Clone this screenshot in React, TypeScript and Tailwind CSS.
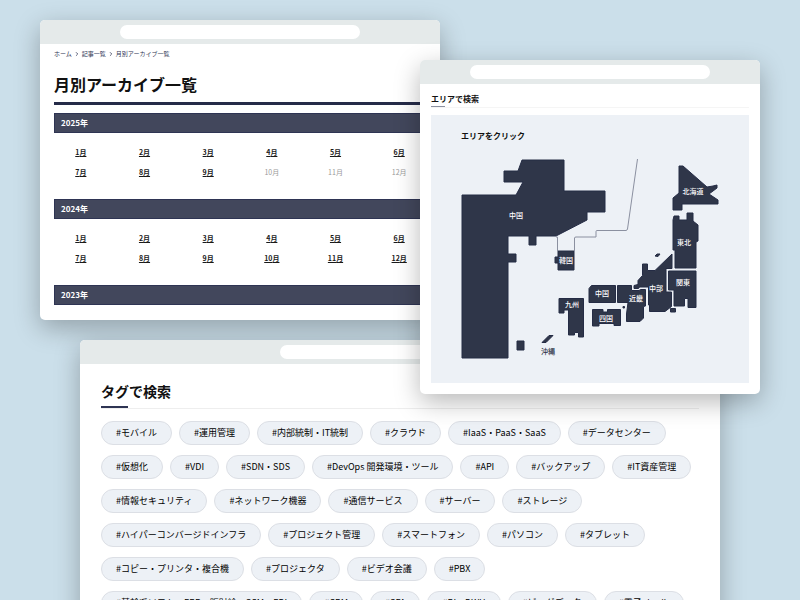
import type { ReactNode } from "react";
import { ChevronRight } from "lucide-react";

const years = [
  { year: 2025, lastMonth: 9 },
  { year: 2024, lastMonth: 12 },
];

const months = [1, 2, 3, 4, 5, 6, 7, 8, 9, 10, 11, 12];

const tags = [
  "モバイル",
  "運用管理",
  "内部統制・IT統制",
  "クラウド",
  "IaaS・PaaS・SaaS",
  "データセンター",
  "仮想化",
  "VDI",
  "SDN・SDS",
  "DevOps 開発環境・ツール",
  "API",
  "バックアップ",
  "IT資産管理",
  "情報セキュリティ",
  "ネットワーク機器",
  "通信サービス",
  "サーバー",
  "ストレージ",
  "ハイパーコンバージドインフラ",
  "プロジェクト管理",
  "スマートフォン",
  "パソコン",
  "タブレット",
  "コピー・プリンタ・複合機",
  "プロジェクタ",
  "ビデオ会議",
  "PBX",
  "基幹系ソフト・ERP・販財給・SCM・EDI",
  "CRM",
  "SFA",
  "BI・DWH",
  "ビッグデータ",
  "電子メール",
];

const areas = [
  {
    id: "china",
    name: "中国",
    x: 516,
    y: 218,
    d: "M462 195H516L523 182H504V171H518L522 160H564V191H605V212H587V220L556 236H536V245H529V236H508V254H516V262H508V358H462Z M517 341H524V350H517Z",
  },
  {
    id: "korea",
    name: "韓国",
    x: 566,
    y: 263,
    d: "M558 251H574V270H558V263H555V257H558Z",
  },
  {
    id: "hokkaido",
    name: "北海道",
    x: 693,
    y: 194,
    d: "M679 166H683L707 187L713 186L717 185V188L709 194L718 200V204H682V210H673V198L679 193Z",
  },
  {
    id: "tohoku",
    name: "東北",
    x: 684,
    y: 245,
    d: "M674 216H679V220H687V213H693V221L698 225V241L696 242V268H675V250H673V220Z",
  },
  {
    id: "kanto",
    name: "関東",
    x: 683,
    y: 285,
    d: "M668.5 271H696V307.5H688V298.5H684.5V306H674V290H668.5Z M670.5 308.5H675.5V312H670.5Z",
  },
  {
    id: "chubu",
    name: "中部",
    x: 656,
    y: 291,
    d: "M672 254V268.5H666V292H671.5V306.5L665 311.5H649.5V305H648.5V287H639.5L638.5 288.5H634V285.5L638 284.5V280.5L642.5 275.5V264H647.5V270.5H655Z M655 256L657 254H660L658 256.5Z",
  },
  {
    id: "kinki",
    name: "近畿",
    x: 636,
    y: 301,
    d: "M617.5 285.5H631.5V290.5H639L640.5 289.5H645.5V306L643.5 306.5V318L640 321.5H626.5V314L628 302.5H617.5Z M623 306.5H624.5V308H623Z",
  },
  {
    id: "chugoku",
    name: "中国",
    x: 602,
    y: 296,
    d: "M591.5 285.5H615.5V302.5H589V288.5Z",
  },
  {
    id: "shikoku",
    name: "四国",
    x: 606,
    y: 321,
    d: "M592.5 309.5H603V312H607.5V309.5H620.5V325.5H614V323.5H599V326H592.5Z",
  },
  {
    id: "kyushu",
    name: "九州",
    x: 572,
    y: 307,
    d: "M559 298.5H583.5V337H578.5V332.5H574.5V335H568.5V310H564V313H559Z",
  },
];

type BrowserWindowProps = {
  className: string;
  barClassName: string;
  children: ReactNode;
};

const BrowserWindow = ({ className, barClassName, children }: BrowserWindowProps) => {
  return (
    <section
      className={`absolute overflow-hidden rounded-[5px] bg-white shadow-[0_8px_26px_rgba(0,0,0,0.28)] ${className}`}
    >
      <div className="flex h-6 items-center justify-center bg-[#e5eaea]">
        <div className={`h-[14px] rounded-full bg-white ${barClassName}`} />
      </div>
      {children}
    </section>
  );
};

const YearTitle = ({ year }: { year: number }) => {
  return (
    <h2 className="flex h-5 items-center border border-[#2e3453] bg-[#42475c] px-[6px] text-[8px] font-bold text-white">
      {year}年
    </h2>
  );
};

const Archive = () => {
  return (
    <BrowserWindow className="left-[5%] top-5 w-1/2" barClassName="w-3/5">
      <div className="px-[14px] pb-[15px] pt-[5px]">
        <nav className="flex items-center gap-[2px] text-[6px] leading-[10px] text-[#2e3453]">
          <a href="#home">ホーム</a>
          <ChevronRight className="size-[6px]" strokeWidth={3} />
          <a href="#articles">記事一覧</a>
          <ChevronRight className="size-[6px]" strokeWidth={3} />
          <span>月別アーカイブ一覧</span>
        </nav>
        <h1 className="mt-[13px] border-b-[3px] border-[#252b48] pb-[6px] text-[16px] font-bold leading-6 text-[#111]">
          月別アーカイブ一覧
        </h1>
        <div className="mt-2">
          {years.map(({ year, lastMonth }) => (
            <div key={year}>
              <YearTitle year={year} />
              <ul className="grid grid-cols-6 gap-x-[10px] gap-y-2 pb-[21px] pt-[13px] text-center text-[7px] leading-3">
                {months.map((month) => (
                  <li key={month}>
                    {month <= lastMonth ? (
                      <a href={`#${year}-${month}`} className="font-bold text-[#1a1a1a] underline">
                        {month}月
                      </a>
                    ) : (
                      <span className="text-[#999]">{month}月</span>
                    )}
                  </li>
                ))}
              </ul>
            </div>
          ))}
          <YearTitle year={2023} />
        </div>
      </div>
    </BrowserWindow>
  );
};

const AreaMap = () => {
  return (
    <svg viewBox="431 145 318 238" className="block w-full" role="img" aria-label="エリア">
      <path
        d="M556 237H557.5V251M574.5 251V238Q574.5 237 576 237H596V231.5Q596 230.5 597 230.5H626Q627 230.5 627.5 229L637.5 159"
        fill="none"
        stroke="#8b90a0"
      />
      {areas.map((area) => (
        <a key={area.id} href={`#${area.id}`}>
          <path d={area.d} fill="#2f3649" stroke="#252c45" strokeLinejoin="round" />
          <text x={area.x} y={area.y} textAnchor="middle" className="fill-white text-[7px] font-medium">
            {area.name}
          </text>
        </a>
      ))}
      <a href="#okinawa">
        <path d="M542 342.5L549 335.5H553L546 342.5Z" fill="#2f3649" stroke="#252c45" />
        <text x="548" y="354" textAnchor="middle" className="fill-[#2f3649] text-[7px] font-medium">
          沖縄
        </text>
      </a>
    </svg>
  );
};

const AreaSearch = () => {
  return (
    <BrowserWindow className="left-[52.5%] top-[60px] w-[42.5%]" barClassName="w-[240px]">
      <div className="px-[11px] pb-[11px] pt-2">
        <div className="border-b border-[#f5f5f5]">
          <h2 className="text-[8px] font-bold leading-[14px] text-[#111]">エリアで検索</h2>
          <div className="h-px w-[14px] bg-[#8b90a0]" />
        </div>
        <div className="mt-[7px] bg-[#edf1f6]">
          <h3 className="px-[30px] pb-[3px] pt-[15px] text-[8px] font-bold leading-3 text-[#111]">
            エリアをクリック
          </h3>
          <AreaMap />
        </div>
      </div>
    </BrowserWindow>
  );
};

const TagSearch = () => {
  return (
    <BrowserWindow className="left-[10%] top-[340px] w-4/5" barClassName="w-[240px]">
      <div className="px-[21px] pb-8 pt-[15px]">
        <div className="border-b border-[#eee]">
          <h2 className="text-[14px] font-bold leading-6 text-[#111]">タグで検索</h2>
          <div className="mt-[3px] h-[2px] w-[27px] bg-[#2e3453]" />
        </div>
        <ul className="mt-3 flex flex-wrap gap-y-[10px]">
          {tags.map((tag) => (
            <li key={tag} className="mr-[7px]">
              <a
                href={`#${tag}`}
                className="flex h-6 items-center rounded-full border border-[#dcdfe5] bg-[#edf1f6] px-[14px] text-[9px] text-black"
              >
                #{tag}
              </a>
            </li>
          ))}
        </ul>
      </div>
    </BrowserWindow>
  );
};

export default function App() {
  return (
    <main className="relative h-screen overflow-hidden bg-[#cbdfea] font-['Noto_Sans_CJK_JP',sans-serif]">
      <Archive />
      <TagSearch />
      <AreaSearch />
    </main>
  );
}
